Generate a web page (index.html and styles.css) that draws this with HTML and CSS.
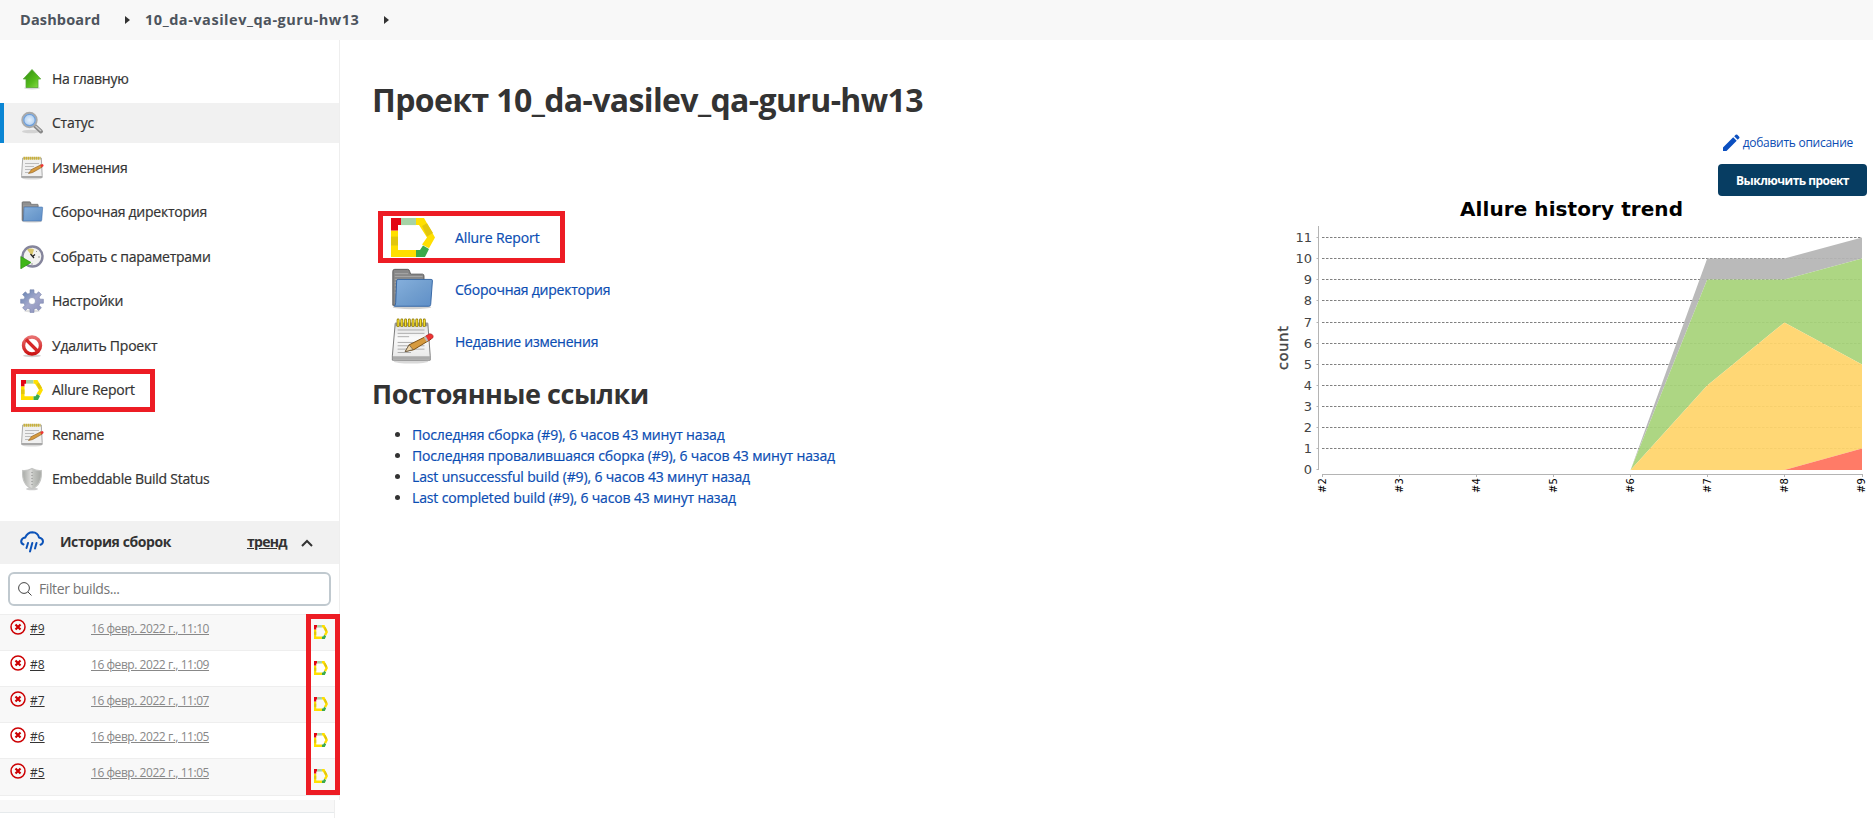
FILE: index.html
```html
<!DOCTYPE html>
<html lang="ru">
<head>
<meta charset="utf-8">
<title>10_da-vasilev_qa-guru-hw13 [Jenkins]</title>
<link rel="stylesheet" href="styles.css">
</head>
<body>
<svg class="defs" width="0" height="0">
  <defs>
    <linearGradient id="gGreen" x1="0" y1="0" x2="1" y2="1"><stop offset="0" stop-color="#2f8a10"/><stop offset=".6" stop-color="#55bb1c"/><stop offset="1" stop-color="#8fe04e"/></linearGradient>
    <linearGradient id="gBlue" x1="0" y1="0" x2="1" y2="1"><stop offset="0" stop-color="#86b0dd"/><stop offset=".5" stop-color="#729fcf"/><stop offset="1" stop-color="#5f8fc8"/></linearGradient>
    <linearGradient id="gPaper" x1="0" y1="0" x2="0" y2="1"><stop offset="0" stop-color="#ddd"/><stop offset=".4" stop-color="#fafafa"/><stop offset="1" stop-color="#e6e6e6"/></linearGradient>
    <linearGradient id="gRed" x1="0" y1="0" x2="0" y2="1"><stop offset="0" stop-color="#e87070"/><stop offset="1" stop-color="#cc1414"/></linearGradient>
    <linearGradient id="gGear" x1="0" y1="0" x2="1" y2="1"><stop offset="0" stop-color="#5f7fae"/><stop offset=".5" stop-color="#a3a8cc"/><stop offset="1" stop-color="#8a8fba"/></linearGradient>
    <linearGradient id="gShield" x1="0" y1="0" x2="1" y2="0"><stop offset="0" stop-color="#a8aaa6"/><stop offset=".45" stop-color="#dcdcda"/><stop offset=".55" stop-color="#c4c6c2"/><stop offset="1" stop-color="#a4a6a2"/></linearGradient>
    <radialGradient id="gLens"><stop offset="0" stop-color="#e6f1fc"/><stop offset="1" stop-color="#a4c8ef"/></radialGradient>
  </defs>
  <symbol id="allure" viewBox="0 0 44 44" preserveAspectRatio="none">
    <path fill="#ffdf00" d="M0 14h7v22h18v8H0z"/>
    <path fill="#e2c60c" d="M0 21h7v10H0z"/>
    <path fill="#e30613" d="M0 0h10v8H7v6H0z"/>
    <path fill="#a6d3a6" d="M10 0h15v8H10z"/>
    <path fill="#ffdf00" d="M25 0h8l11 22-6 12-7-4 5-8-8-14h-3z"/>
    <path fill="#e2c60c" d="M31 9l5-3 6 11-6 4z"/>
    <path fill="#3aaa4a" d="M25 36l4 0 3-5 6 4-4 9h-9z"/>
  </symbol>
  <symbol id="notepad" viewBox="0 0 48 48">
    <ellipse cx="23" cy="45.5" rx="18" ry="2" fill="#000" opacity=".15"/>
    <path d="M6.500 5.500h34l2.500 34v4.500H3.500v-4.500z" fill="url(#gPaper)" stroke="#777"/>
    <path d="M4 40h39v3.500H4z" fill="#aaa"/>
    <path d="M6.500 5h34v3.500h-34z" fill="#999"/>
    <path d="M9.500 2v6M13.400 2v6M17.300 2v6M21.200 2v6M25.100 2v6M29 2v6M32.900 2v6M36.800 2v6" stroke="#8a7600" stroke-width="3" stroke-linecap="round"/>
    <path d="M9.500 2v6M13.400 2v6M17.300 2v6M21.200 2v6M25.100 2v6M29 2v6M32.900 2v6M36.800 2v6" stroke="#f5dc2c" stroke-width="1.500" stroke-linecap="round"/>
    <path d="M9 12.500h28M9 16h28M9 19.500h12M9 25.500h28M9 29h28M9 32.500h28M9 36h14" stroke="#aaa" stroke-width="1"/>
    <path d="M17 35l4-7 20-10 3 4-18 11z" fill="#d69a3e" stroke="#7a4d12" stroke-linejoin="round"/>
    <path d="M17 35l4-7 4 5z" fill="#f0d6a8" stroke="#444" stroke-width=".6"/>
    <path d="M38 19l4-2.500q3-.5 4 2t-2.500 3.500L41 24z" fill="#e33" stroke="#9c2a2a" stroke-width=".6"/>
    <path d="M36.500 20l2-1 2.500 4.500-2 1z" fill="#bbb"/>
  </symbol>
  <symbol id="note-small" viewBox="0 0 24 24">
    <ellipse cx="12" cy="22.300" rx="10" ry="1.200" fill="#000" opacity=".15"/>
    <path d="M2.700 2h18.600l.9 17.500v2H1.600v-2z" fill="#f0f0f0" stroke="#aaa"/>
    <path d="M2 20h20v1.500H2z" fill="#a8a8a8"/>
    <path d="M3.500 2.200h17" stroke="#c9b13a" stroke-width="3" stroke-dasharray="1.500 .5"/>
    <path d="M5 7.500h14M5 10.500h9M5 13.500h7M5 16.500h6" stroke="#bbb"/>
    <path d="M8.500 17.500l3-4 9.500-4.800 1.200 2.400-9.500 5.400z" fill="#d69a3e" stroke="#8a5a1c" stroke-width=".6"/>
    <path d="M20.300 9l2-1q1.500.3 1.300 2l-2.200 1.400z" fill="#e33"/>
  </symbol>
  <symbol id="folder" viewBox="0 0 48 48">
    <ellipse cx="24" cy="43" rx="20" ry="2" fill="#000" opacity=".18"/>
    <path d="M4 41V5.500q0-2 2-2h13.500q1.500 0 2 2l1 3H35q1.500 0 1.500 2V20L10 41z" fill="#888" stroke="#5a5a5a"/>
    <path d="M6 8h14M6 11h29M6 14h29M6 17h6M6 20h3M6 24h3M6 28h2" stroke="#a8a8a8"/>
    <path d="M8 15.500q0-1.500 1.500-1.500H44q1.500 0 1.300 1.500L43.500 40q0 2-2 2H5.500Q7 41 7 38z" fill="url(#gBlue)" stroke="#3465a4"/>
  </symbol>
  <symbol id="failed" viewBox="0 0 16 16">
    <circle cx="8" cy="8" r="7" fill="none" stroke="#cc0003" stroke-width="1.500"/>
    <path d="M5.500 5.500l5 5M10.500 5.500l-5 5" stroke="#cc0003" stroke-width="2.200"/>
  </symbol>
</svg>

<header class="breadcrumbs">
  <a class="crumb">Dashboard</a><svg class="arrow" viewBox="0 0 5 8"><path d="M0 0l5 4-5 4z"/></svg>
  <a class="crumb project">10_da-vasilev_qa-guru-hw13</a><svg class="arrow" viewBox="0 0 5 8"><path d="M0 0l5 4-5 4z"/></svg>
</header>

<div class="page">
  <aside class="side">
    <nav class="tasks">
      <a class="task"><svg viewBox="0 0 24 24"><ellipse cx="12" cy="21" rx="8" ry="1.500" fill="#000" opacity=".15"/><path d="M12 2.500l8.700 9.500H18v8.500H6V12H3.300z" fill="url(#gGreen)" stroke="#57a836" stroke-width=".8"/></svg><span>На главную</span></a>
      <a class="task active"><svg viewBox="0 0 24 24"><ellipse cx="11" cy="20.500" rx="9" ry="1.800" fill="#000" opacity=".12"/><path d="M14.500 14.500l6.500 6" stroke="#888" stroke-width="4" stroke-linecap="round"/><path d="M15.500 15l5.500 5" stroke="#ccc" stroke-width="1.500"/><circle cx="9.500" cy="9" r="7.200" fill="url(#gLens)" stroke="#aaa" stroke-width="2"/><circle cx="9.500" cy="9" r="5.700" fill="none" stroke="#6f9fd8" stroke-width="1.200"/></svg><span>Статус</span></a>
      <a class="task"><svg><use href="#note-small"/></svg><span>Изменения</span></a>
      <a class="task"><svg><use href="#folder"/></svg><span>Сборочная директория</span></a>
      <a class="task"><svg viewBox="0 0 24 24"><circle cx="12.500" cy="11.500" r="10" fill="#f2f2f0" stroke="#85859c" stroke-width="2.400"/><path d="M12 11L7 4.500q4-2 7 0z" fill="#d8c66a"/><path d="M12.500 11.500l2.500-2M10.500 9l3.500 4" stroke="#222" stroke-width="1.200"/><path d="M18 12h2M12 18v2M17 6l-1 1" stroke="#999"/><path d="M.8 11.500L11 17.500 .8 23.800z" fill="#3fb618" stroke="#2e8f10" stroke-width=".7"/></svg><span>Собрать с параметрами</span></a>
      <a class="task"><svg viewBox="0 0 24 24"><ellipse cx="12" cy="22" rx="8" ry="1.500" fill="#000" opacity=".12"/><path fill="url(#gGear)" stroke="#7a86ad" stroke-width=".6" fill-rule="evenodd" d="M10 .8h4v3.400l2.200.9 2.500-2.300 2.700 2.700-2.300 2.600.9 2.100h3.400v4H20l-.9 2.100 2.300 2.500-2.700 2.700-2.500-2.200-2.200.9v3.200h-4v-3.200l-2.200-.9-2.500 2.200-2.700-2.700 2.300-2.500-.9-2.100H.6v-4H4l.9-2.100-2.300-2.600 2.700-2.700 2.500 2.300 2.200-.9zM12 8.500a3.500 3.500 0 1 0 0 7 3.500 3.500 0 0 0 0-7z"/></svg><span>Настройки</span></a>
      <a class="task"><svg viewBox="0 0 24 24"><ellipse cx="12" cy="21.800" rx="9" ry="1.500" fill="#000" opacity=".18"/><circle cx="12" cy="11.500" r="8.500" fill="#fff" stroke="url(#gRed)" stroke-width="3.400"/><path d="M6 5.500l12 12" stroke="#d62828" stroke-width="3.200"/></svg><span>Удалить Проект</span></a>
      <a class="task"><svg class="al"><use href="#allure"/></svg><span>Allure Report</span></a>
      <a class="task"><svg><use href="#note-small"/></svg><span>Rename</span></a>
      <a class="task"><svg viewBox="0 0 24 24"><ellipse cx="12" cy="22" rx="6" ry="1.300" fill="#000" opacity=".2"/><path d="M12 1.500q5 2.700 9.300 2Q22.500 17.500 12 21.800 1.500 17.500 2.700 3.500 7 4.200 12 1.500z" fill="url(#gShield)" stroke="#c4c5c3" stroke-width="1.200"/><path d="M12 5v14" stroke="#888" stroke-dasharray="1 2"/></svg><span>Embeddable Build Status</span></a>
    </nav>

    <section class="history">
      <div class="history-head">
        <svg class="cloud" viewBox="0 0 24 22" fill="none" stroke="#0b52b8" stroke-width="2" stroke-linecap="round"><path d="M3.500 13.500Q1 12.500 1.200 10q.5-3 4-3.500Q7.500 1.200 12.500 1.200q5.300.2 6.500 5.300 3.800.8 4 3.800-.1 2.700-2.500 3.500M8 12l-1.500 5M12.300 12l-2.300 8.500M16.500 12L15 17.500"/></svg>
        <b class="history-title">История сборок</b>
        <a class="trend">тренд</a>
        <svg class="chev" viewBox="0 0 12 8"><path d="M1 7l5-5 5 5" fill="none" stroke="#333" stroke-width="2"/></svg>
      </div>
      <label class="filter">
        <svg viewBox="0 0 14 14" fill="none" stroke="#444"><circle cx="6" cy="6" r="5.400"/><path d="M10 10l3.500 3.500"/></svg>
        <span>Filter builds...</span>
      </label>
      <div class="builds">
        <div class="build"><svg class="st"><use href="#failed"/></svg><a class="num">#9</a><a class="date">16 февр. 2022 г., 11:10</a><svg class="ic"><use href="#allure"/></svg></div>
        <div class="build"><svg class="st"><use href="#failed"/></svg><a class="num">#8</a><a class="date">16 февр. 2022 г., 11:09</a><svg class="ic"><use href="#allure"/></svg></div>
        <div class="build"><svg class="st"><use href="#failed"/></svg><a class="num">#7</a><a class="date">16 февр. 2022 г., 11:07</a><svg class="ic"><use href="#allure"/></svg></div>
        <div class="build"><svg class="st"><use href="#failed"/></svg><a class="num">#6</a><a class="date">16 февр. 2022 г., 11:05</a><svg class="ic"><use href="#allure"/></svg></div>
        <div class="build"><svg class="st"><use href="#failed"/></svg><a class="num">#5</a><a class="date">16 февр. 2022 г., 11:05</a><svg class="ic"><use href="#allure"/></svg></div>
      </div>
    </section>
    <div class="side-tail"></div>
    <i class="mark mark-task"></i>
    <i class="mark mark-builds"></i>
  </aside>

  <main class="main">
    <div class="left">
      <h1>Проект 10_da-vasilev_qa-guru-hw13</h1>
      <div class="links">
        <a class="link marked"><svg class="big-al"><use href="#allure"/></svg><span>Allure Report</span></a>
        <a class="link"><svg><use href="#folder"/></svg><span>Сборочная директория</span></a>
        <a class="link"><svg><use href="#notepad"/></svg><span>Недавние изменения</span></a>
      </div>
      <h2>Постоянные ссылки</h2>
      <ul class="perma">
        <li><a>Последняя сборка (#9), 6 часов 43 минут назад</a></li>
        <li><a>Последняя провалившаяся сборка (#9), 6 часов 43 минут назад</a></li>
        <li><a>Last unsuccessful build (#9), 6 часов 43 минут назад</a></li>
        <li><a>Last completed build (#9), 6 часов 43 минут назад</a></li>
      </ul>
    </div>
    <div class="right">
      <a class="describe"><svg viewBox="0 0 18 18"><path fill="#0b4fc0" d="M1 17v-3.500L11.200 3.300l3.500 3.500L4.500 17zM12.200 2.300L13.700.8q.8-.6 1.600 0l1.900 1.900q.7.8 0 1.600l-1.500 1.500z"/></svg><span>добавить описание</span></a>
      <button class="disable">Выключить проект</button>
      <svg class="chart" viewBox="1270 196 600 304" width="600" height="304">
        <text class="ct" x="1460" y="216" textLength="223">Allure history trend</text>
        <g class="grid"><path d="M1322 237.500h540M1322 258.500h540M1322 279.500h540M1322 300.500h540M1322 322.500h540M1322 343.500h540M1322 364.500h540M1322 385.500h540M1322 406.500h540M1322 427.500h540M1322 448.500h540"/></g>
        <g opacity=".93">
          <path fill="#b5b5b5" d="M1630.600 470L1707.200 258.500h77.200L1862 237.500v21L1784.400 279.500h-77.200z"/>
          <path fill="#a7d37a" d="M1630.600 470L1707.200 279.500h77.200L1862 258.500v106L1784.400 322.500 1707.200 385.500z"/>
          <path fill="#ffd56b" d="M1630.600 470L1707.200 385.500 1784.400 322.500 1862 364.500v84L1784.400 470z"/>
          <path fill="#ff725c" d="M1784.400 470L1862 448.500V470z"/>
        </g>
        <path class="axis" d="M1318.500 226v244M1316.500 237.500h2M1316.500 258.500h2M1316.500 279.500h2M1316.500 300.500h2M1316.500 322.500h2M1316.500 343.500h2M1316.500 364.500h2M1316.500 385.500h2M1316.500 406.500h2M1316.500 427.500h2M1316.500 448.500h2M1316.500 469.500h2M1322 474.500h541M1322.500 474v3M1399.500 474v3M1476.500 474v3M1553.500 474v3M1630.500 474v3M1707.500 474v3M1784.500 474v3M1862.500 474v3"/>
        <g class="yl">
          <text x="1312" y="242">11</text><text x="1312" y="263">10</text><text x="1312" y="284">9</text><text x="1312" y="305">8</text><text x="1312" y="326.500">7</text><text x="1312" y="348">6</text><text x="1312" y="369">5</text><text x="1312" y="390">4</text><text x="1312" y="411">3</text><text x="1312" y="432">2</text><text x="1312" y="453">1</text><text x="1312" y="474">0</text>
        </g>
        <text class="cl" transform="translate(1288 370) rotate(-90)" textLength="44">count</text>
        <g class="xl">
          <text transform="translate(1325.500 493) rotate(-90)">#2</text><text transform="translate(1402.500 493) rotate(-90)">#3</text><text transform="translate(1479.500 493) rotate(-90)">#4</text><text transform="translate(1556.500 493) rotate(-90)">#5</text><text transform="translate(1633.500 493) rotate(-90)">#6</text><text transform="translate(1710.500 493) rotate(-90)">#7</text><text transform="translate(1787.500 493) rotate(-90)">#8</text><text transform="translate(1865 493) rotate(-90)">#9</text>
        </g>
      </svg>
    </div>
  </main>
</div>
</body>
</html>
```
FILE: styles.css
```css
* { box-sizing: border-box; }
body { margin: 0; height: 818px; overflow: hidden; background: #fff; color: #333; font: 14px/20px "Open Sans", "Noto Sans", sans-serif; }
svg { display: block; flex: none; }
.defs { position: absolute; }

.breadcrumbs { height: 40px; background: #f8f8f8; display: flex; align-items: center; padding-left: 20px; }
.crumb { width: 106px; font-size: 14.5px; font-weight: 700; color: #4d545d; white-space: nowrap; letter-spacing: .15px; }
.crumb.project { width: 214px; margin-left: 15px; letter-spacing: .53px; }
.arrow { width: 5px; height: 8px; fill: #333; margin-left: -1px; }
.crumb.project + .arrow { margin-left: 25px; }

.page { display: flex; height: 778px; }
.side { width: 340px; flex: none; position: relative; display: flex; flex-direction: column; }
.tasks { padding-top: 18.5px; height: 481px; border-right: 1px solid #eee; }
.task { display: flex; align-items: center; height: 40px; margin-bottom: 4.5px; padding-left: 20px; white-space: nowrap; letter-spacing: -.25px; -webkit-text-stroke: .2px; }
.task svg { width: 24px; height: 24px; margin-right: 8px; }
.task svg.al { width: 22px; height: 20px; margin: 0 9px 0 1px; }
.task.active { background: #f1f1f1; border-left: 4px solid #0b86d4; padding-left: 16px; }

.history { border-right: 1px solid #eee; height: 279px; }
.history-head { height: 43px; background: #f1f1f1; display: flex; align-items: center; padding: 0 25px 2px 20px; }
.cloud { width: 24px; height: 22px; margin-right: 16px; }
.history-title { width: 187px; white-space: nowrap; letter-spacing: -.42px; }
.trend { width: 40px; margin-right: 14px; font-weight: 700; text-decoration: underline; letter-spacing: -.7px; }
.chev { width: 12px; height: 8px; margin-top: 3px; }
.filter { display: flex; align-items: center; height: 34px; width: 323px; margin: 8px 0 8px 8px; padding-left: 8px; border: 2px solid #c0c9cf; border-radius: 6px; color: #757575; letter-spacing: -.4px; }
.filter svg { width: 14px; height: 14px; margin-right: 7px; }
.build { display: flex; height: 36px; padding: 4px 11px 0 10px; border-top: 1px solid #eee; font-size: 12px; }
.build:nth-child(odd) { background: #f8f8f8; }
.build:last-child { height: 38px; border-bottom: 1px solid #eee; }
.st { width: 16px; height: 16px; }
.num { width: 61px; margin-left: 4px; text-decoration: underline; }
.date { color: #888; text-decoration: underline; white-space: nowrap; letter-spacing: -.45px; }
.ic { width: 14px; height: 14px; margin: 6px 0 0 auto; }
.side-tail { width: 335px; height: 18px; border-right: 1px solid #eee; background: linear-gradient(#f8f8f8 12px, #e6eaec 12px, #e6eaec 13px, #fff 13px); }

/* Highlight frames drawn over the page */
.mark { position: absolute; border: 5px solid #ed1c24; }
.mark-task { left: 11px; top: 329px; width: 144px; height: 43px; }
.mark-builds { left: 306px; top: 574px; width: 34px; height: 181px; }

.main { flex: 1; display: flex; justify-content: space-between; }
.left { padding-left: 32px; }
h1 { margin: 40px 0 91px; font-size: 32px; line-height: 40px; white-space: nowrap; letter-spacing: -.62px; }
.links { margin-left: 6px; color: #0b4db3; letter-spacing: -.23px; -webkit-text-stroke: .2px; }
.link { display: flex; align-items: center; height: 52px; padding: 2px 0 0 11px; }
.link svg { width: 46px; height: 46px; margin: -2px 20px 0 0; }
.link.marked { width: 187px; border: 5px solid #ed1c24; padding-left: 8px; letter-spacing: -.1px; }
.link svg.big-al { width: 44px; height: 39px; margin-right: 20px; }
h2 { margin: 7px 0 10px; font-size: 27px; line-height: 40px; white-space: nowrap; letter-spacing: -.45px; }
.perma { margin: 0; padding-left: 40px; line-height: 21px; }
.perma a { color: #0b4db3; white-space: nowrap; letter-spacing: -.15px; -webkit-text-stroke: .2px; }

.right { display: flex; flex-direction: column; padding: 94px 3px 0 0; align-items: flex-end; }
.describe { display: flex; align-items: center; height: 18px; margin: 0 17px 12px 0; font-size: 12px; color: #0b4db3; white-space: nowrap; letter-spacing: -.27px; }
.describe svg { width: 18px; height: 18px; margin-right: 3px; }
.disable { width: 149px; height: 32px; padding: 0; margin-right: 3px; border: 0; border-radius: 4px; background: #073d62; color: #fff; font: 700 12px "Open Sans", "Noto Sans", sans-serif; white-space: nowrap; letter-spacing: -.55px; }
.chart { overflow: visible; font-family: "DejaVu Sans", sans-serif; }
.ct { font-size: 20px; font-weight: 700; fill: #000; }
.grid path { stroke: #808080; stroke-dasharray: 2.5 1.5; fill: none; }
.axis { stroke: #b4b4b4; fill: none; }
.yl { font-size: 13px; text-anchor: end; fill: #444; }
.cl { font-size: 14.5px; fill: #444; stroke: #444; stroke-width: .4; }
.xl { font-size: 10px; fill: #000; }
```
